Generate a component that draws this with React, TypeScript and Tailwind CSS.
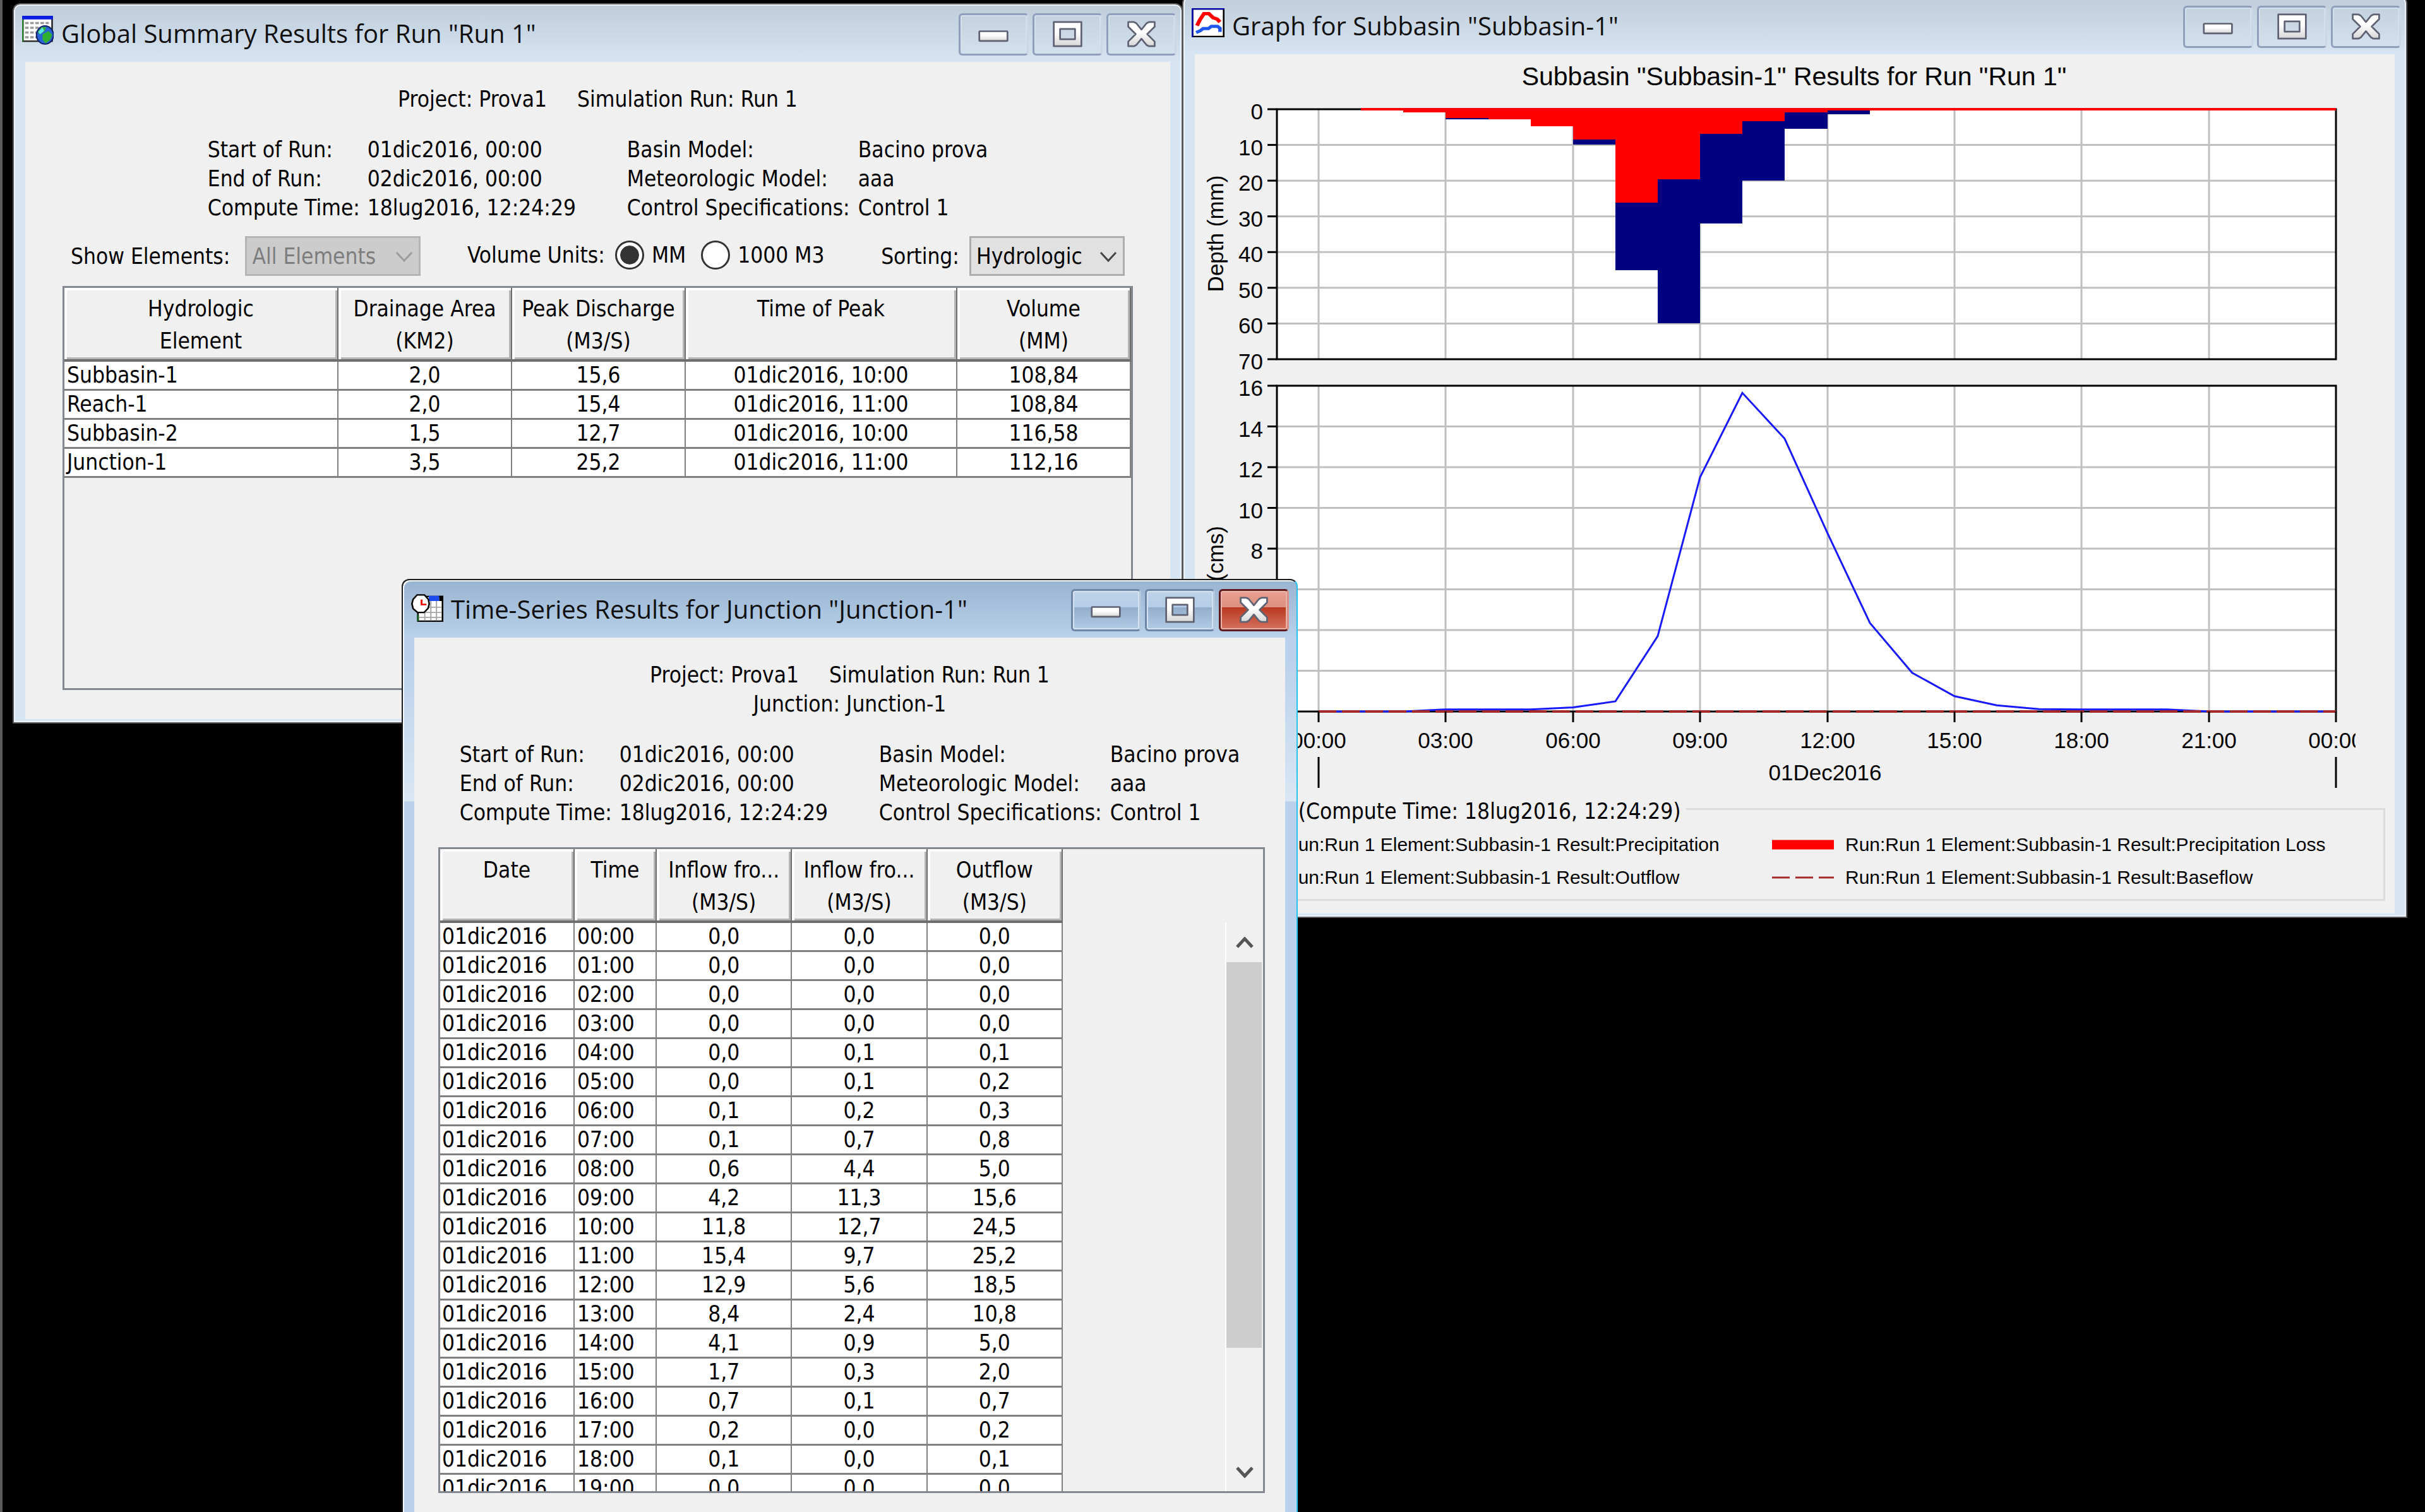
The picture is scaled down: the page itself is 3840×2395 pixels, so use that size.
import {useState} from "react";
import type {ReactNode} from "react";
import clsx from "clsx";

type WindowProps = {
    title: string;
    icon: ReactNode;
    active?: boolean;
    className?: string;
    children: ReactNode;
};

const runInfo = [
    ["Start of Run:", "01dic2016, 00:00", "Basin Model:", "Bacino prova"],
    ["End of Run:", "02dic2016, 00:00", "Meteorologic Model:", "aaa"],
    ["Compute Time:", "18lug2016, 12:24:29", "Control Specifications:", "Control 1"],
];

const summaryRows = [
    ["Subbasin-1", "2,0", "15,6", "01dic2016, 10:00", "108,84"],
    ["Reach-1", "2,0", "15,4", "01dic2016, 11:00", "108,84"],
    ["Subbasin-2", "1,5", "12,7", "01dic2016, 10:00", "116,58"],
    ["Junction-1", "3,5", "25,2", "01dic2016, 11:00", "112,16"],
];

const seriesRows = [
    ["00:00", "0,0", "0,0", "0,0"],
    ["01:00", "0,0", "0,0", "0,0"],
    ["02:00", "0,0", "0,0", "0,0"],
    ["03:00", "0,0", "0,0", "0,0"],
    ["04:00", "0,0", "0,1", "0,1"],
    ["05:00", "0,0", "0,1", "0,2"],
    ["06:00", "0,1", "0,2", "0,3"],
    ["07:00", "0,1", "0,7", "0,8"],
    ["08:00", "0,6", "4,4", "5,0"],
    ["09:00", "4,2", "11,3", "15,6"],
    ["10:00", "11,8", "12,7", "24,5"],
    ["11:00", "15,4", "9,7", "25,2"],
    ["12:00", "12,9", "5,6", "18,5"],
    ["13:00", "8,4", "2,4", "10,8"],
    ["14:00", "4,1", "0,9", "5,0"],
    ["15:00", "1,7", "0,3", "2,0"],
    ["16:00", "0,7", "0,1", "0,7"],
    ["17:00", "0,2", "0,0", "0,2"],
    ["18:00", "0,1", "0,0", "0,1"],
    ["19:00", "0,0", "0,0", "0,0"],
];

// hourly depth in mm: [hour, precipitation, loss]
const rain = [
    [1, 0.4, 0.4],
    [2, 0.9, 0.9],
    [3, 2.9, 2.4],
    [4, 2.9, 2.9],
    [5, 4.8, 4.8],
    [6, 9.9, 8.5],
    [7, 45, 26.2],
    [8, 60, 19.6],
    [9, 32, 6.9],
    [10, 20, 3.3],
    [11, 5.5, 0.9],
    [12, 1.5, 0.3],
];

// outflow in m3/s, one value per hour
const outflow = [
    0, 0, 0, 0.1, 0.1, 0.1, 0.2, 0.5, 3.7, 11.5, 15.65, 13.4, 8.75,
    4.35, 1.9, 0.75, 0.3, 0.12, 0.1, 0.1, 0.1, 0, 0, 0, 0,
];

function SummaryIcon() {
    return (
        <svg className="w-[50px] h-[46px] mt-1 shrink-0" viewBox="0 0 16 16" preserveAspectRatio="none" aria-hidden="true">
            <rect x="0.4" y="0.4" width="14.8" height="13.6" fill="#fff" stroke="#222" strokeWidth="0.8"/>
            <rect x="0" y="0" width="15.6" height="2" fill="#0a1ee0"/>
            <path d="M1.5 4h12M1.5 6.6h12M1.5 9.2h12M1.5 11.8h6" stroke="#9a9a9a" strokeWidth="1.2" strokeDasharray="1.8 0.8"/>
            <path d="M0.4 2v12" stroke="#2f8a3a" strokeWidth="0.7"/>
            <ellipse cx="11.6" cy="10.6" rx="4.3" ry="5" fill="#2a63d6" stroke="#10206a" strokeWidth="0.7"/>
            <path d="M8 8.6 10 6.2h2.2l-.6 2-1.6 1.4-1.4.6zM10.4 10.2l3-1.8 1.8 2-1 2.8-2.2 2-1.6-2z" fill="#2fae2f"/>
            <path d="M8.2 9 10.2 6.4l1 1.8-2 2z" fill="#5be4f0"/>
        </svg>
    );
}

function GraphIcon() {
    return (
        <svg className="w-[52px] h-[46px] mt-1 shrink-0" viewBox="0 0 16 16" preserveAspectRatio="none" aria-hidden="true">
            <rect x="0.4" y="0.4" width="15.2" height="15.2" fill="#fff" stroke="#000" strokeWidth="0.8"/>
            <path d="M0.4 16V0.4H16" fill="none" stroke="#0000a8" strokeWidth="0.8"/>
            <path d="M2.6 9.6 4 6.4 6 3h2.4l2 2.2 2 .8 1.4 1.6" fill="none" stroke="#f00" strokeWidth="1.9"/>
            <path d="M2.2 13.4l2-1 1.4-1.2h2.6l1.4-1.2h3l1.2 1v2" fill="none" stroke="#1f57ee" strokeWidth="1.7"/>
        </svg>
    );
}

function SeriesIcon() {
    return (
        <svg className="w-[51px] h-[44px] mt-2 shrink-0" viewBox="0 0 16 16" preserveAspectRatio="none" aria-hidden="true">
            <rect x="3.4" y="1.4" width="12.2" height="14.2" fill="#fff" stroke="#000" strokeWidth="0.8"/>
            <rect x="8.8" y="1" width="5.2" height="3" fill="#1c4cf0"/>
            <rect x="14" y="1" width="2" height="3" fill="#000"/>
            <path d="M4 7.6h11M4 10.6h11M4 13.4h11M6.8 10v5.4M9.8 4v11.4M12.6 4v11.4" stroke="#a5a5a5" strokeWidth="0.6"/>
            <path d="M3.4 12v3.6" stroke="#175c1c" strokeWidth="1"/>
            <path d="M3 .5h3.6l2 2.6.4 2.6-.6 2.6L6.4 10.6H3.2L1 8.4.4 5.6 1 3z" fill="#fff" stroke="#000" strokeWidth="0.8"/>
            <path d="M5.2 3.2v2.8h2.4" fill="none" stroke="#f00000" strokeWidth="0.9"/>
        </svg>
    );
}

function ControlGlyph({kind}: {kind: string}) {
    return (
        <svg className="w-full h-full" viewBox="0 0 110 67" aria-hidden="true">
            <defs>
                <linearGradient id={`metal-${kind}`} x1="0" y1="0" x2="0" y2="1">
                    <stop offset="0.4" stopColor="#fff"/>
                    <stop offset="1" stopColor="#d6d6d6"/>
                </linearGradient>
            </defs>
            <g fill={`url(#metal-${kind})`} stroke="#5f6273" strokeWidth="3" strokeLinejoin="round" transform="translate(0 1)">
                {kind === "minimize" && <rect x="30" y="27" width="49" height="17" rx="1"/>}
                {kind === "maximize" && (
                    <path fillRule="evenodd" d="M31 11h48v42H31zM42 23v18h26V23z"/>
                )}
                {kind === "close" && (
                    <path d="M32 11h10l4 2 9 11 9-11 4-2h10v8L65 32l13 13v8H68l-4-2-9-11-9 11-4 2H32v-8l13-13-13-13z"/>
                )}
            </g>
        </svg>
    );
}

function WindowButton({kind, active}: {kind: string; active?: boolean}) {
    return (
        <button
            type="button"
            aria-label={kind}
            className={clsx(
                "w-[111px] h-[67px] rounded-md border-[3px]",
                !active && "border-[#8f9fbc] border-r-[#c9d7e7] shadow-[inset_0_0_0_2px_#d3dfec]",
                active && kind !== "close" && "border-[#6f86a6] border-r-[#b3c7dd] shadow-[inset_0_0_0_2px_#d3e1f0] bg-[linear-gradient(#bdd3ea_0%,#b5cde6_42%,#93aecb_43%,#b3cce6_100%)]",
                active && kind === "close" && "border-[#5e1a1c] border-r-[#d98f84] shadow-[inset_0_0_0_2px_#eab3a8] bg-[linear-gradient(#e8a092_0%,#dd8f80_42%,#b8391f_43%,#d67260_100%)]",
            )}
        >
            <ControlGlyph kind={kind}/>
        </button>
    );
}

function AppWindow({title, icon, active, className, children}: WindowProps) {
    return (
        <section
            className={clsx(
                "absolute flex flex-col border-2 rounded-t-xl pb-[5px]",
                active
                    ? "border-[#1c1c1c] border-r-[#27c4e8] bg-[linear-gradient(#99b4d1_0px,#b9d1ea_92px,#b9d1ea_120px,#d9e6f5_350px,#b9d1ea_351px)] shadow-[inset_2px_2px_0_#f3f8fd]"
                    : "border-[#5a5a5a] bg-[linear-gradient(#bfcddb_0px,#d7e4f2_92px)] shadow-[inset_0_0_0_2px_#eef4fa]",
                className,
            )}
        >
            <header className={clsx("flex items-start h-[91px] pl-[13px] pt-[14px]", active ? "pr-3" : "pr-2")}>
                <div className="flex items-start flex-1 min-w-0 gap-3">
                    {icon}
                    <h1 className="text-[40px] leading-[64px] whitespace-nowrap font-['Open_Sans',sans-serif] text-[#101010]">{title}</h1>
                </div>
                <div className="flex gap-[6px]">
                    <WindowButton kind="minimize" active={active}/>
                    <WindowButton kind="maximize" active={active}/>
                    <WindowButton kind="close" active={active}/>
                </div>
            </header>
            <div className="flex flex-col mx-[18px] bg-[#f0f0f0]">{children}</div>
        </section>
    );
}

function RunHeader({junction}: {junction?: string}) {
    return (
        <>
            <div className="flex justify-center gap-12 pt-9">
                <p>Project: Prova1</p>
                <p>Simulation Run: Run 1</p>
            </div>
            {junction && <p className="text-center">Junction: {junction}</p>}
            <dl className="grid grid-cols-[253px_411px_366px_auto] justify-center pt-[34px] whitespace-nowrap">
                {runInfo.map(([a, b, c, d]) => (
                    <div key={a} className="contents">
                        <dt>{a}</dt>
                        <dd>{b}</dd>
                        <dt>{c}</dt>
                        <dd>{d}</dd>
                    </div>
                ))}
            </dl>
        </>
    );
}

function HeadCell({lines}: {lines: string[]}) {
    return (
        <th
            scope="col"
            className="h-[117px] pt-2 align-top font-normal leading-[51px] whitespace-nowrap border-r-2 border-b-4 border-[#6e6e6e] shadow-[inset_4px_4px_0_#fff,inset_-3px_-3px_0_#b4b4b4]"
        >
            {lines.map((line) => (
                <span key={line} className="block">{line}</span>
            ))}
        </th>
    );
}

function Chevron({className}: {className?: string}) {
    return (
        <svg className={className} viewBox="0 0 28 18" fill="none" stroke="currentColor" aria-hidden="true">
            <path d="M2 2l12 13L26 2"/>
        </svg>
    );
}

function Combo({id, value, disabled, className}: {id: string; value: string; disabled?: boolean; className: string}) {
    return (
        <div className={clsx("relative h-[63px]", className)}>
            <select
                id={id}
                disabled={disabled}
                className="w-full h-full pl-2 appearance-none border-[3px] border-[#adadad] bg-[#e1e1e1] opacity-100 disabled:border-[#b3b3b8] disabled:bg-[#cccccc] disabled:text-[#7d7d7d]"
            >
                <option>{value}</option>
            </select>
            <Chevron className={clsx("absolute right-3 top-6 w-7 h-[18px] stroke-[3px] pointer-events-none", disabled ? "text-[#9c9c9c]" : "text-[#444]")}/>
        </div>
    );
}

function SummaryWindow() {
    const [units, setUnits] = useState("mm");
    const radio = "w-[46px] h-[46px] appearance-none rounded-full border-[3px] border-[#333] bg-white p-[5px] bg-clip-content shadow-[inset_0_0_0_5px_#fff] checked:bg-[#333]";

    return (
        <AppWindow
            title={'Global Summary Results for Run "Run 1"'}
            icon={<SummaryIcon/>}
            className="left-5 top-[5px] w-[calc(50%-67px)]"
        >
            <RunHeader/>
            <div className="flex justify-between items-center px-[72px] pt-[22px] whitespace-nowrap">
                <div className="flex items-center gap-6">
                    <label htmlFor="show-elements">Show Elements:</label>
                    <Combo id="show-elements" value="All Elements" disabled className="w-[278px]"/>
                </div>
                <fieldset className="flex items-center pr-4 pb-1">
                    <span className="pr-4">Volume Units:</span>
                    <input id="unit-mm" type="radio" name="units" className={radio} checked={units === "mm"} onChange={() => setUnits("mm")}/>
                    <label htmlFor="unit-mm" className="pl-3 pr-6">MM</label>
                    <input id="unit-m3" type="radio" name="units" className={radio} checked={units === "m3"} onChange={() => setUnits("m3")}/>
                    <label htmlFor="unit-m3" className="pl-3">1000 M3</label>
                </fieldset>
                <div className="flex items-center gap-4">
                    <label htmlFor="sorting">Sorting:</label>
                    <Combo id="sorting" value="Hydrologic" className="w-[246px]"/>
                </div>
            </div>
            <div className="mt-4 mx-[59px] mb-[46px] h-[640px] border-[3px] border-[#828790]">
                <table className="w-full table-fixed border-separate border-spacing-0 text-center">
                    <colgroup>
                        <col className="w-[434px]"/>
                        <col className="w-[275px]"/>
                        <col className="w-[275px]"/>
                        <col/>
                        <col className="w-[275px]"/>
                    </colgroup>
                    <thead>
                        <tr>
                            <HeadCell lines={["Hydrologic", "Element"]}/>
                            <HeadCell lines={["Drainage Area", "(KM2)"]}/>
                            <HeadCell lines={["Peak Discharge", "(M3/S)"]}/>
                            <HeadCell lines={["Time of Peak"]}/>
                            <HeadCell lines={["Volume", "(MM)"]}/>
                        </tr>
                    </thead>
                    <tbody>
                        {summaryRows.map((row) => (
                            <tr key={row[0]} className="bg-white">
                                {row.map((cell, i) => (
                                    <td key={i} className="h-[46px] leading-[43px] border-r-2 border-b-[3px] border-[#808080] first:text-left first:pl-1">{cell}</td>
                                ))}
                            </tr>
                        ))}
                    </tbody>
                </table>
            </div>
        </AppWindow>
    );
}

function SeriesWindow() {
    return (
        <AppWindow
            title={'Time-Series Results for Junction "Junction-1"'}
            icon={<SeriesIcon/>}
            active
            className="left-[636px] top-[917px] w-[calc(50%-501px)]"
        >
            <RunHeader junction="Junction-1"/>
            <div className="flex justify-between mt-8 ml-[38px] mr-8 mb-12 h-[1023px] border-[3px] border-[#828790] overflow-hidden">
                <table className="self-start table-fixed w-[986px] border-separate border-spacing-0 text-center">
                    <colgroup>
                        <col className="w-[213px]"/>
                        <col className="w-[130px]"/>
                        <col/>
                        <col/>
                        <col/>
                    </colgroup>
                    <thead>
                        <tr>
                            <HeadCell lines={["Date"]}/>
                            <HeadCell lines={["Time"]}/>
                            <HeadCell lines={["Inflow fro...", "(M3/S)"]}/>
                            <HeadCell lines={["Inflow fro...", "(M3/S)"]}/>
                            <HeadCell lines={["Outflow", "(M3/S)"]}/>
                        </tr>
                    </thead>
                    <tbody>
                        {seriesRows.map(([time, ...values]) => (
                            <tr key={time} className="bg-white">
                                <td className="h-[46px] leading-[43px] pl-[3px] text-left border-r-2 border-b-[3px] border-[#808080]">01dic2016</td>
                                <td className="pl-1 leading-[43px] text-left border-r-2 border-b-[3px] border-[#808080]">{time}</td>
                                {values.map((value, i) => (
                                    <td key={i} className="leading-[43px] border-r-2 border-b-[3px] border-[#808080]">{value}</td>
                                ))}
                            </tr>
                        ))}
                    </tbody>
                </table>
                <div className="flex flex-col w-[60px] mt-[117px] border-l-2 border-white text-[#555]">
                    <button type="button" aria-label="Scroll up" className="flex items-center justify-center h-[62px]">
                        <Chevron className="w-7 h-[18px] stroke-[5px] rotate-180"/>
                    </button>
                    <div className="h-[611px] mr-[2px] bg-[#cdcdcd]"/>
                    <div className="flex-1"/>
                    <button type="button" aria-label="Scroll down" className="flex items-center justify-center h-[60px]">
                        <Chevron className="w-7 h-[18px] stroke-[5px]"/>
                    </button>
                </div>
            </div>
        </AppWindow>
    );
}

const hourX = (hour: number) => Math.round(196 + hour * 67.125);
const depthY = (mm: number) => 87 + mm * 5.657;
const flowY = (cms: number) => 1041 - cms * 32.25;

function Chart() {
    const hours = [0, 3, 6, 9, 12, 15, 18, 21, 24];

    return (
        <svg className="block w-full" viewBox="0 0 1900 1168" fontSize="35" fontFamily="'Liberation Sans', Arial, sans-serif">
            <text x="949" y="49" fontSize="41" textAnchor="middle">Subbasin "Subbasin-1" Results for Run "Run 1"</text>

            <rect x="130" y="87" width="1677" height="396" fill="#fff"/>
            <rect x="130" y="525" width="1677" height="516" fill="#fff"/>
            <g stroke="#c0c0c0" strokeWidth="3">
                {hours.slice(0, 8).map((h) => (
                    <path key={h} d={`M${hourX(h)} 87V483M${hourX(h)} 525V1041`}/>
                ))}
                {[10, 20, 30, 40, 50, 60].map((mm) => (
                    <path key={mm} d={`M130 ${depthY(mm)}H1807`}/>
                ))}
                {[2, 4, 6, 8, 10, 12, 14].map((cms) => (
                    <path key={cms} d={`M130 ${flowY(cms)}H1807`}/>
                ))}
            </g>
            <g fill="none" stroke="#000" strokeWidth="3">
                <rect x="130" y="87" width="1677" height="396"/>
                <rect x="130" y="525" width="1677" height="516"/>
            </g>

            <g shapeRendering="crispEdges">
                {rain.map(([h, total, loss]) => (
                    <g key={h}>
                        <rect x={hourX(h)} y="87" width={hourX(h + 1) - hourX(h)} height={total * 5.657} fill="#000080"/>
                        <rect x={hourX(h)} y="87" width={hourX(h + 1) - hourX(h)} height={loss * 5.657} fill="#f00"/>
                    </g>
                ))}
            </g>
            <path d={`M${hourX(1)} 87H1807`} stroke="#f00" strokeWidth="4"/>

            <polyline
                points={outflow.map((v, h) => `${hourX(h)},${flowY(v)}`).join(" ")}
                fill="none"
                stroke="#1a1aff"
                strokeWidth="3"
            />
            <path d="M196 1041H1807" stroke="#a52a2a" strokeWidth="4" strokeDasharray="28 9"/>

            <g stroke="#000" strokeWidth="3">
                {[0, 10, 20, 30, 40, 50, 60, 70].map((mm) => (
                    <path key={mm} d={`M115 ${depthY(mm)}H130`}/>
                ))}
                {[0, 2, 4, 6, 8, 10, 12, 14, 16].map((cms) => (
                    <path key={cms} d={`M115 ${flowY(cms)}H130`}/>
                ))}
                {hours.map((h) => (
                    <path key={h} d={`M${hourX(h)} 1041V1058`}/>
                ))}
                <path d="M196 1113V1162M1807 1113V1162"/>
            </g>

            <g textAnchor="end">
                {[0, 10, 20, 30, 40, 50, 60, 70].map((mm) => (
                    <text key={mm} x="108" y={depthY(mm) + 16}>{mm}</text>
                ))}
                {[0, 2, 4, 6, 8, 10, 12, 14, 16].map((cms) => (
                    <text key={cms} x="108" y={flowY(cms) + 16}>{cms}</text>
                ))}
                <text transform="translate(45 747) rotate(-90)">Flow (cms)</text>
            </g>
            <text transform="translate(45 284) rotate(-90)" textAnchor="middle">Depth (mm)</text>

            <clipPath id="axis-clip">
                <rect x="0" y="1060" width="1838" height="108"/>
            </clipPath>
            <g textAnchor="middle" clipPath="url(#axis-clip)">
                {hours.map((h) => (
                    <text key={h} x={hourX(h)} y="1099">{`${String(h % 24).padStart(2, "0")}:00`}</text>
                ))}
                <text x="998" y="1150">01Dec2016</text>
            </g>
        </svg>
    );
}

const legendItems = [
    {label: "Run:Run 1 Element:Subbasin-1 Result:Precipitation", color: "#000080", width: 15},
    {label: "Run:Run 1 Element:Subbasin-1 Result:Precipitation Loss", color: "#ff0000", width: 15},
    {label: "Run:Run 1 Element:Subbasin-1 Result:Outflow", color: "#1a1aff", width: 3},
    {label: "Run:Run 1 Element:Subbasin-1 Result:Baseflow", color: "#a52a2a", width: 3, dash: "28 9"},
];

function GraphWindow() {
    return (
        <AppWindow
            title={'Graph for Subbasin "Subbasin-1"'}
            icon={<GraphIcon/>}
            className="left-[calc(50%-48px)] right-7 -top-[7px]"
        >
            <Chart/>
            <fieldset className="mx-[15px] mb-5 pt-1 pb-2 border-[3px] border-[#dcdcdc]">
                <legend className="ml-3 px-2 pt-2">Legend (Compute Time: 18lug2016, 12:24:29)</legend>
                <ul className="grid grid-cols-2 pl-2 pr-20 text-[30px] leading-[52px] whitespace-nowrap font-['Liberation_Sans',Arial,sans-serif]">
                    {legendItems.map((item) => (
                        <li key={item.label} className="flex items-center gap-[18px]">
                            <svg className="w-[98px] h-4 shrink-0" viewBox="0 0 98 16" aria-hidden="true">
                                <path d="M0 8H98" stroke={item.color} strokeWidth={item.width} strokeDasharray={item.dash}/>
                            </svg>
                            {item.label}
                        </li>
                    ))}
                </ul>
            </fieldset>
        </AppWindow>
    );
}

export default function App() {
    return (
        <main className="relative min-h-screen overflow-hidden bg-black shadow-[inset_4px_0_0_#5a5a5a] text-black text-[35px] leading-[46px] font-['DejaVu_Sans_Condensed','Noto_Sans',sans-serif]">
            <SummaryWindow/>
            <GraphWindow/>
            <SeriesWindow/>
        </main>
    );
}
